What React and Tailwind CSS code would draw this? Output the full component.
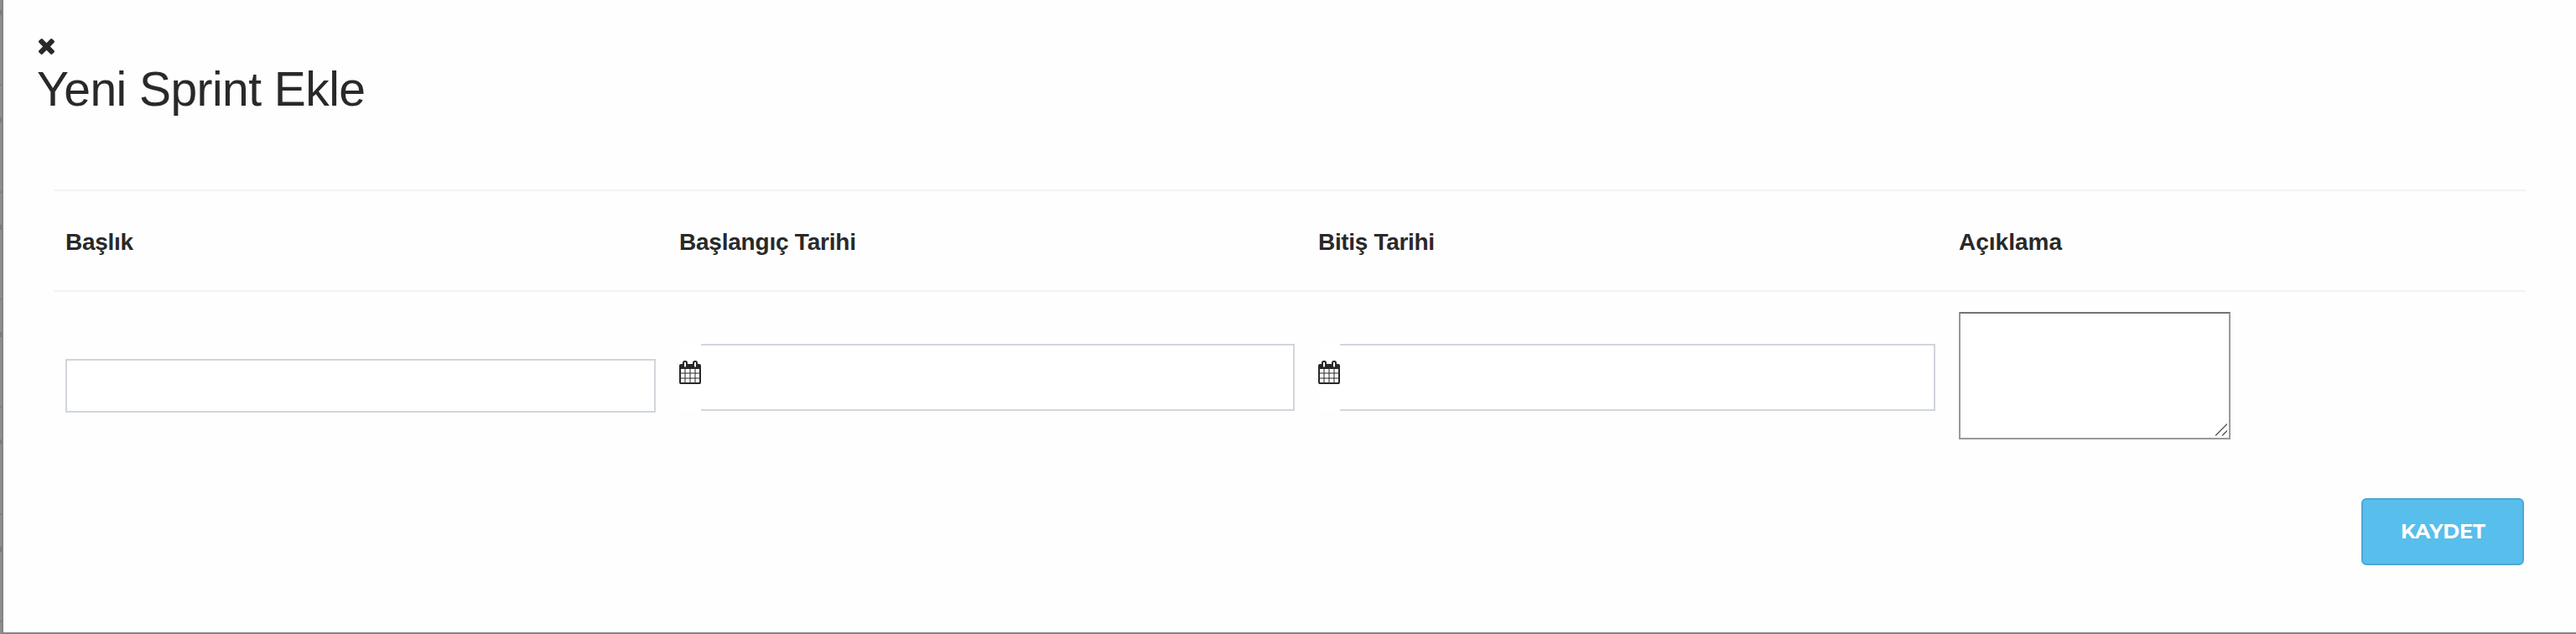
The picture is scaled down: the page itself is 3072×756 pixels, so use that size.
const CalendarIcon = () => (
  <svg viewBox="64 0 1664 1792" className="mt-5 h-7 w-[26px] shrink-0 fill-[#292929]">
    <path d="M192 1664h288v-288h-288v288zm352 0h320v-288h-320v288zm-352-352h288v-320h-288v320zm352 0h320v-320h-320v320zm-352-384h288v-288h-288v288zm736 736h320v-288h-320v288zm-384-736h320v-288h-320v288zm768 736h288v-288h-288v288zm-384-352h320v-320h-320v320zm-352-864v-288q0-13-9.5-22.5t-22.5-9.5h-64q-13 0-22.5 9.5t-9.5 22.5v288q0 13 9.5 22.5t22.5 9.5h64q13 0 22.5-9.5t9.5-22.5zm736 864h288v-320h-288v320zm-384-384h320v-288h-320v288zm384 0h288v-288h-288v288zm32-480v-288q0-13-9.5-22.5t-22.5-9.5h-64q-13 0-22.5 9.5t-9.5 22.5v288q0 13 9.5 22.5t22.5 9.5h64q13 0 22.5-9.5t9.5-22.5zm384-64v1280q0 52-38 90t-90 38h-1408q-52 0-90-38t-38-90v-1280q0-52 38-90t90-38h128v-96q0-66 47-113t113-47h64q66 0 113 47t47 113v96h384v-96q0-66 47-113t113-47h64q66 0 113 47t47 113v96h128q52 0 90 38t38 90z" />
  </svg>
);

const DateField = ({ label }) => (
  <div className="flex h-20 bg-white">
    <CalendarIcon />
    <input aria-label={label} className="h-20 min-w-0 flex-1 border-2 border-l-0 border-[#d1d5dc] bg-white px-4 text-[28px] outline-none" />
  </div>
);

const COLUMNS = [
  { title: "Başlık", tracking: "tracking-[-0.3px]" },
  { title: "Başlangıç Tarihi", tracking: "tracking-[-0.22px]" },
  { title: "Bitiş Tarihi", tracking: "tracking-[-0.32px]" },
  { title: "Açıklama", tracking: "tracking-normal" },
];

// Edge of the dimmed page that stays visible beside the dialog
const Backdrop = () => (
  <div className="flex h-full w-1 shrink-0">
    <div className="w-0.5 overflow-hidden bg-[#8f8e8c]">
      {[0, 1, 2, 3, 4, 5].map((i) => (
        <div key={i} className="h-32 pt-3">
          <div className="h-1.5 bg-[#7b7b7a]" />
          <div className="mt-[82px] h-0.5 bg-[#7f7f7e]" />
        </div>
      ))}
    </div>
    <div className="w-0.5 bg-[#858483]" />
  </div>
);

export default function App() {
  return (
    <div className="flex h-[756px] w-[3072px] overflow-hidden bg-[#858585] font-['Liberation_Sans',Arial,sans-serif] text-[#292929]">
      <Backdrop />
      <div className="h-[754px] flex-1 bg-[#fefefe] pl-[41px] pr-[60px] pt-[45px]">
        <button aria-label="Kapat" className="block h-5 w-5">
          <svg viewBox="302 366 1188 1188" className="ml-[0.5px] h-[19px] w-[19px] fill-[#292929]">
            <path d="M1490 1322q0 40-28 68l-136 136q-28 28-68 28t-68-28l-294-294-294 294q-28 28-68 28t-68-28l-136-136q-28-28-28-68t28-68l294-294-294-294q-28-28-28-68t28-68l136-136q28-28 68-28t68 28l294 294 294-294q28-28 68-28t68 28l136 136q28 28 28 68t-28 68l-294 294 294 294q28 28 28 68z" />
          </svg>
        </button>
        <h1 className="-ml-px mt-[11px] h-[150px] text-[57px] leading-[60px] tracking-[-0.55px]">Yeni Sprint Ekle</h1>

        <div className="ml-[19px]">
          <div className="grid h-[122px] grid-cols-[732px_762px_764px_690px] border-y-2 border-[#f3f3f3] text-[28px] font-bold leading-8">
            {COLUMNS.map(({ title, tracking }) => (
              <div key={title} className={`px-3.5 pt-[45px] ${tracking}`}>{title}</div>
            ))}
          </div>
          <div className="grid h-[246px] grid-cols-[732px_762px_764px_690px]">
            <div className="px-3.5 pt-20">
              <input aria-label="Başlık" className="block h-16 w-full border-2 border-[#d1d5dc] bg-white px-4 text-[28px] outline-none" />
            </div>
            <div className="px-3.5 pt-[62px]"><DateField label="Başlangıç Tarihi" /></div>
            <div className="px-3.5 pt-[62px]"><DateField label="Bitiş Tarihi" /></div>
            <div className="px-3.5 pt-6">
              <div className="relative h-[152px] w-[324px]">
                <textarea aria-label="Açıklama" className="block h-full w-full resize-none border-2 border-[#999] border-t-[#737373] bg-white p-1 outline-none" />
                <svg viewBox="0 0 14 15" className="absolute bottom-1 right-1 h-[15px] w-3.5 fill-none stroke-[#555]" strokeWidth="1.3">
                  <path d="M0 14.5 14 .5M8 14.5 14 8.5" />
                </svg>
              </div>
            </div>
          </div>
          <div className="flex justify-end pr-0.5">
            <button className="h-20 w-[194px] rounded-[6px] border-2 border-[#4da8d5] bg-[#58beeb] pl-px font-['Montserrat',Inter,sans-serif] text-2xl font-bold text-white">KAYDET</button>
          </div>
        </div>
      </div>
    </div>
  );
}
